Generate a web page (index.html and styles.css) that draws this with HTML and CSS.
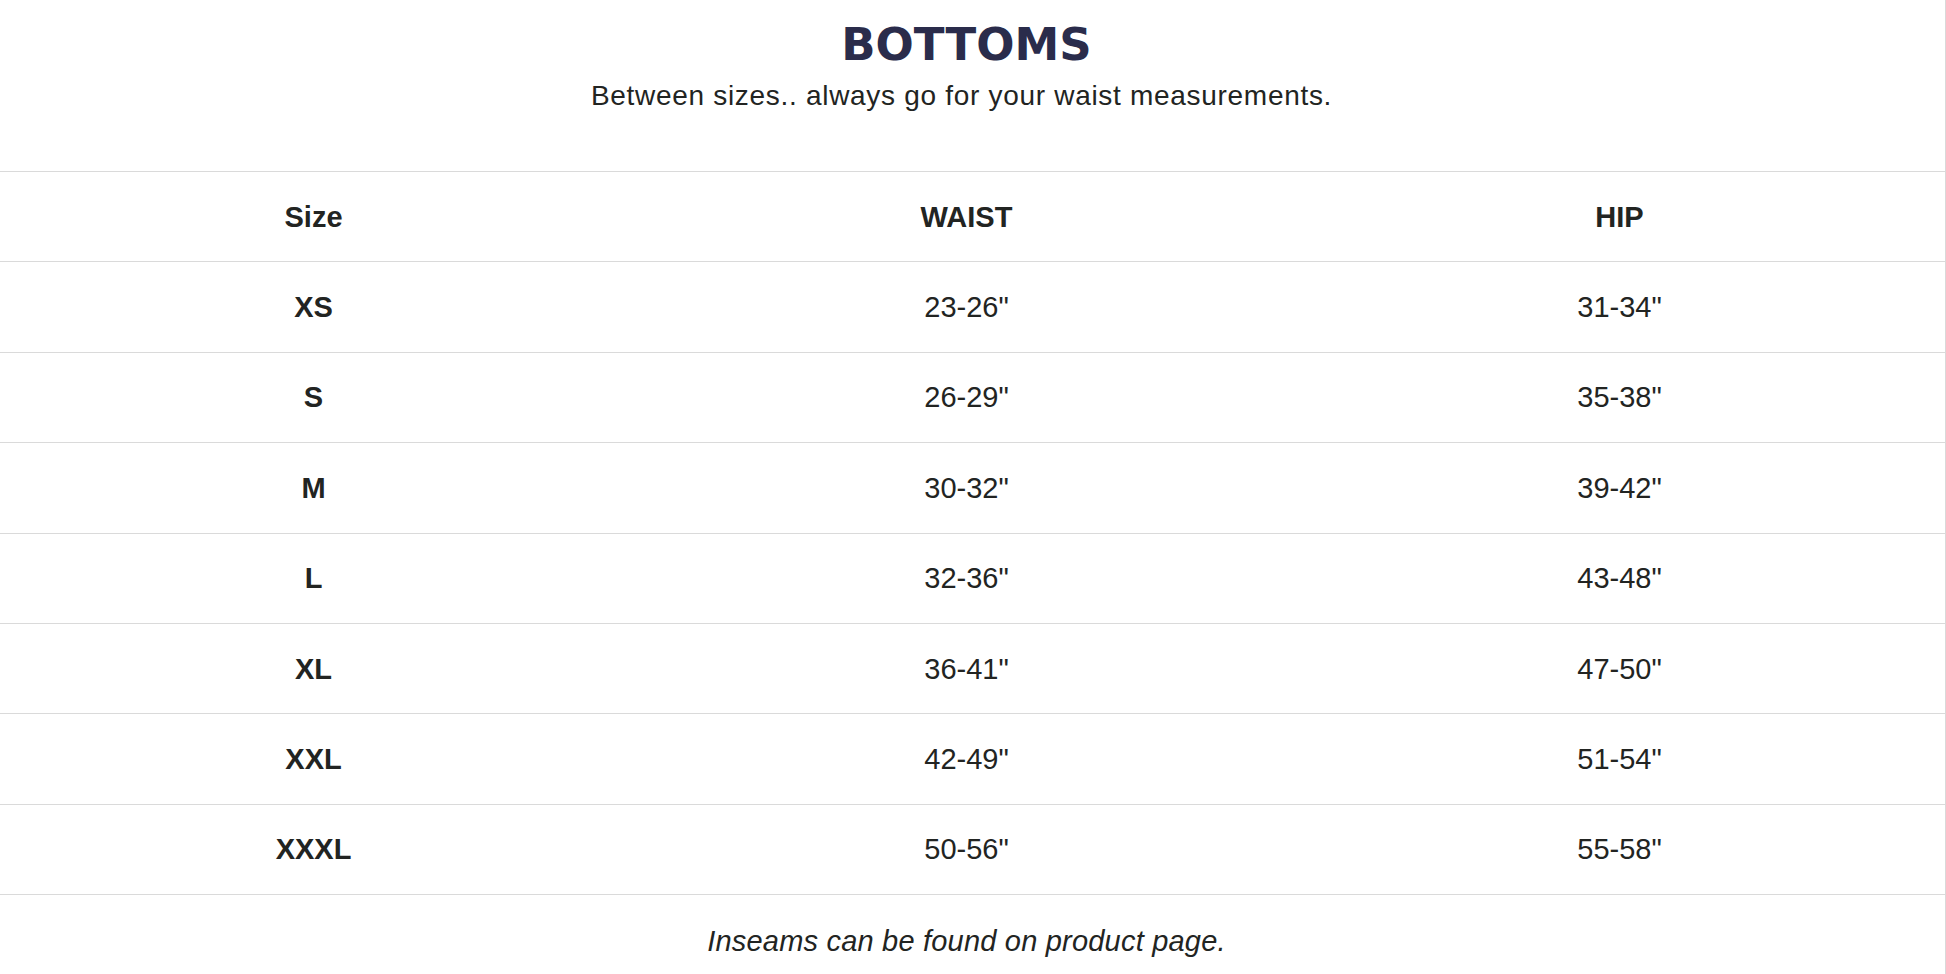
FILE: index.html
```html
<!DOCTYPE html>
<html lang="en">
<head>
<meta charset="utf-8">
<title>Bottoms size chart</title>
<link rel="stylesheet" href="styles.css">
</head>
<body>
<div class="page">
  <header class="intro">
    <h1 class="title">BOTTOMS</h1>
    <p class="subtitle">Between sizes.. always go for your waist measurements.</p>
  </header>
  <div class="chart">
    <div class="row head">
      <div class="cell key">Size</div>
      <div class="cell">WAIST</div>
      <div class="cell">HIP</div>
    </div>
    <div class="row">
      <div class="cell key">XS</div>
      <div class="cell">23-26"</div>
      <div class="cell">31-34"</div>
    </div>
    <div class="row">
      <div class="cell key">S</div>
      <div class="cell">26-29"</div>
      <div class="cell">35-38"</div>
    </div>
    <div class="row">
      <div class="cell key">M</div>
      <div class="cell">30-32"</div>
      <div class="cell">39-42"</div>
    </div>
    <div class="row">
      <div class="cell key">L</div>
      <div class="cell">32-36"</div>
      <div class="cell">43-48"</div>
    </div>
    <div class="row">
      <div class="cell key">XL</div>
      <div class="cell">36-41"</div>
      <div class="cell">47-50"</div>
    </div>
    <div class="row">
      <div class="cell key">XXL</div>
      <div class="cell">42-49"</div>
      <div class="cell">51-54"</div>
    </div>
    <div class="row">
      <div class="cell key">XXXL</div>
      <div class="cell">50-56"</div>
      <div class="cell">55-58"</div>
    </div>
  </div>
  <p class="note">Inseams can be found on product page.</p>
</div>
</body>
</html>
```
FILE: styles.css
```css
html, body {
  margin: 0;
  padding: 0;
  background: #ffffff;
}

body {
  font-family: "Liberation Sans", Arial, sans-serif;
  color: #222422;
}

.page {
  width: 1946px;
  height: 974px;
  box-sizing: border-box;
  border-right: 1px solid #d9d9d9;
  display: flex;
  flex-direction: column;
  overflow: hidden;
}

.intro {
  width: 1933px;
  height: 171px;
  box-sizing: border-box;
  padding-top: 22px;
  display: flex;
  flex-direction: column;
  align-items: center;
}

.title {
  margin: 0;
  font-family: "DejaVu Sans", "Inter", sans-serif;
  font-weight: 700;
  font-size: 45px;
  line-height: 45px;
  color: #2a2c4b;
}

.subtitle {
  margin: 13px 10px 0 0;
  font-size: 28px;
  line-height: 32px;
  letter-spacing: 0.7px;
  color: #222422;
}

.chart {
  display: flex;
  flex-direction: column;
  border-top: 1px solid #dadada;
}

.row {
  height: 90.4px;
  box-sizing: border-box;
  display: grid;
  grid-template-columns: 627px 679px 627px 1fr;
  align-items: center;
  border-bottom: 1px solid #dadada;
}

.cell {
  text-align: center;
  font-size: 29px;
  line-height: 34px;
}

.key,
.head .cell {
  font-weight: 700;
}

.note {
  width: 1933px;
  margin: 0;
  padding-top: 26px;
  text-align: center;
  font-style: italic;
  font-size: 29px;
  line-height: 40px;
  letter-spacing: 0.2px;
}
```
